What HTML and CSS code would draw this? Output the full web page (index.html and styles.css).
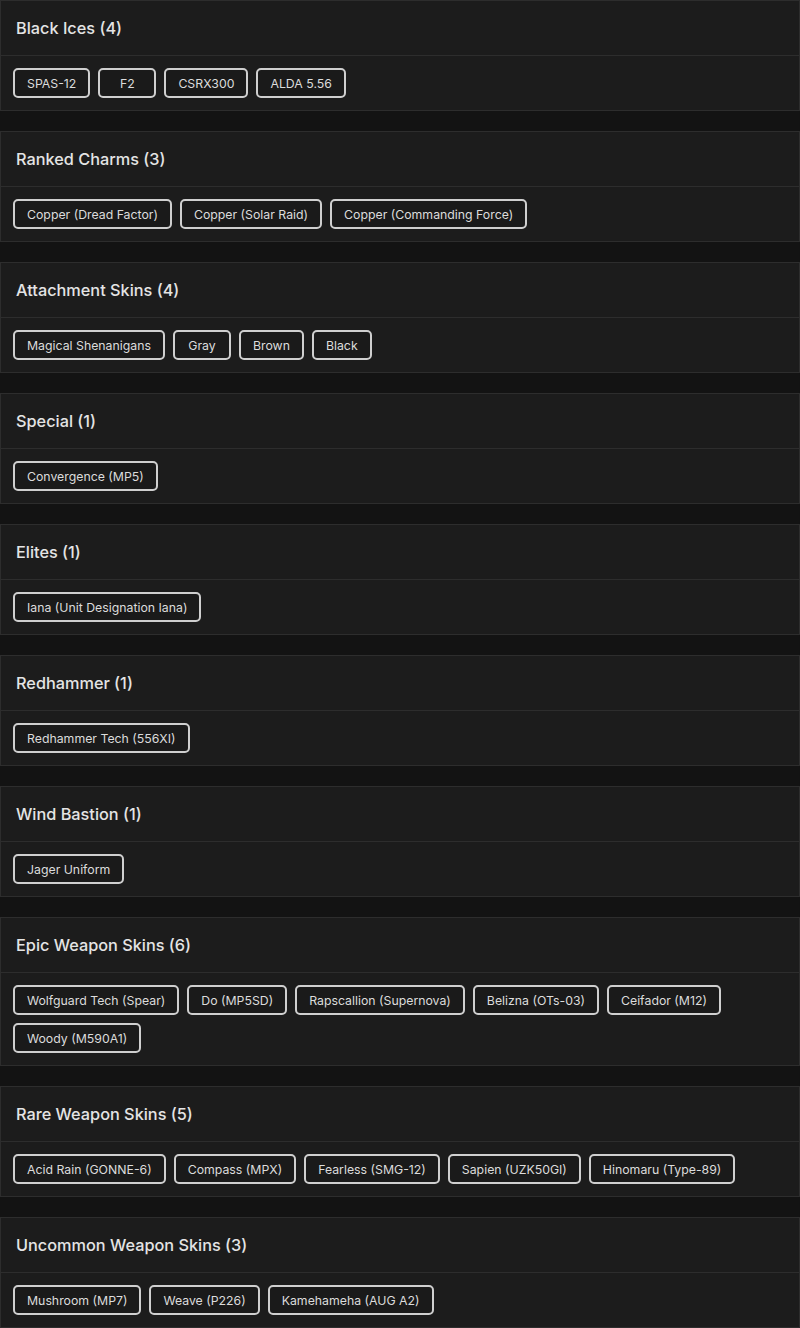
FILE: index.html
```html
<!DOCTYPE html>
<html lang="en">
<head>
<meta charset="utf-8">
<title>Items</title>
<link rel="stylesheet" href="styles.css">
</head>
<body>
<main class="list">
  <section class="card">
    <h2 class="card-title">Black Ices (4)</h2>
    <div class="chips">
      <span class="chip">SPAS-12</span><span class="chip">F2</span><span class="chip">CSRX300</span><span class="chip">ALDA 5.56</span>
    </div>
  </section>
  <section class="card">
    <h2 class="card-title">Ranked Charms (3)</h2>
    <div class="chips">
      <span class="chip">Copper (Dread Factor)</span><span class="chip">Copper (Solar Raid)</span><span class="chip">Copper (Commanding Force)</span>
    </div>
  </section>
  <section class="card">
    <h2 class="card-title">Attachment Skins (4)</h2>
    <div class="chips">
      <span class="chip">Magical Shenanigans</span><span class="chip">Gray</span><span class="chip">Brown</span><span class="chip">Black</span>
    </div>
  </section>
  <section class="card">
    <h2 class="card-title">Special (1)</h2>
    <div class="chips">
      <span class="chip">Convergence (MP5)</span>
    </div>
  </section>
  <section class="card">
    <h2 class="card-title">Elites (1)</h2>
    <div class="chips">
      <span class="chip">Iana (Unit Designation Iana)</span>
    </div>
  </section>
  <section class="card">
    <h2 class="card-title">Redhammer (1)</h2>
    <div class="chips">
      <span class="chip">Redhammer Tech (556XI)</span>
    </div>
  </section>
  <section class="card">
    <h2 class="card-title">Wind Bastion (1)</h2>
    <div class="chips">
      <span class="chip">Jager Uniform</span>
    </div>
  </section>
  <section class="card">
    <h2 class="card-title">Epic Weapon Skins (6)</h2>
    <div class="chips">
      <span class="chip">Wolfguard Tech (Spear)</span><span class="chip">Do (MP5SD)</span><span class="chip">Rapscallion (Supernova)</span><span class="chip">Belizna (OTs-03)</span><span class="chip">Ceifador (M12)</span><span class="chip">Woody (M590A1)</span>
    </div>
  </section>
  <section class="card">
    <h2 class="card-title">Rare Weapon Skins (5)</h2>
    <div class="chips">
      <span class="chip">Acid Rain (GONNE-6)</span><span class="chip">Compass (MPX)</span><span class="chip">Fearless (SMG-12)</span><span class="chip">Sapien (UZK50GI)</span><span class="chip">Hinomaru (Type-89)</span>
    </div>
  </section>
  <section class="card">
    <h2 class="card-title">Uncommon Weapon Skins (3)</h2>
    <div class="chips">
      <span class="chip">Mushroom (MP7)</span><span class="chip">Weave (P226)</span><span class="chip">Kamehameha (AUG A2)</span>
    </div>
  </section>
</main>
</body>
</html>
```
FILE: styles.css
```css
html, body {
  margin: 0;
  padding: 0;
  background: #131313;
}
body {
  font-family: Inter, "Open Sans", "Liberation Sans", sans-serif;
  color: #e2e2e2;
}
.list {
  display: flex;
  flex-direction: column;
  gap: 20px;
}
.card {
  background: #1c1c1c;
  border: 1px solid #2d2d2d;
}
.card-title {
  margin: 0;
  padding: 16px 15px;
  font-size: 16.3px;
  line-height: 22px;
  font-weight: 500;
  color: #e4e4e4;
  border-bottom: 1px solid #2d2d2d;
}
.chips {
  display: flex;
  flex-wrap: wrap;
  gap: 8px 8px;
  padding: 12px;
}
.chip {
  box-sizing: border-box;
  height: 30px;
  min-width: 58px;
  padding: 0 12px;
  border: 2px solid #cfcfcf;
  border-radius: 5px;
  font-size: 12.3px;
  line-height: 27px;
  text-align: center;
  color: #dcdcdc;
  background: #1a1a1a;
  white-space: nowrap;
}
```
